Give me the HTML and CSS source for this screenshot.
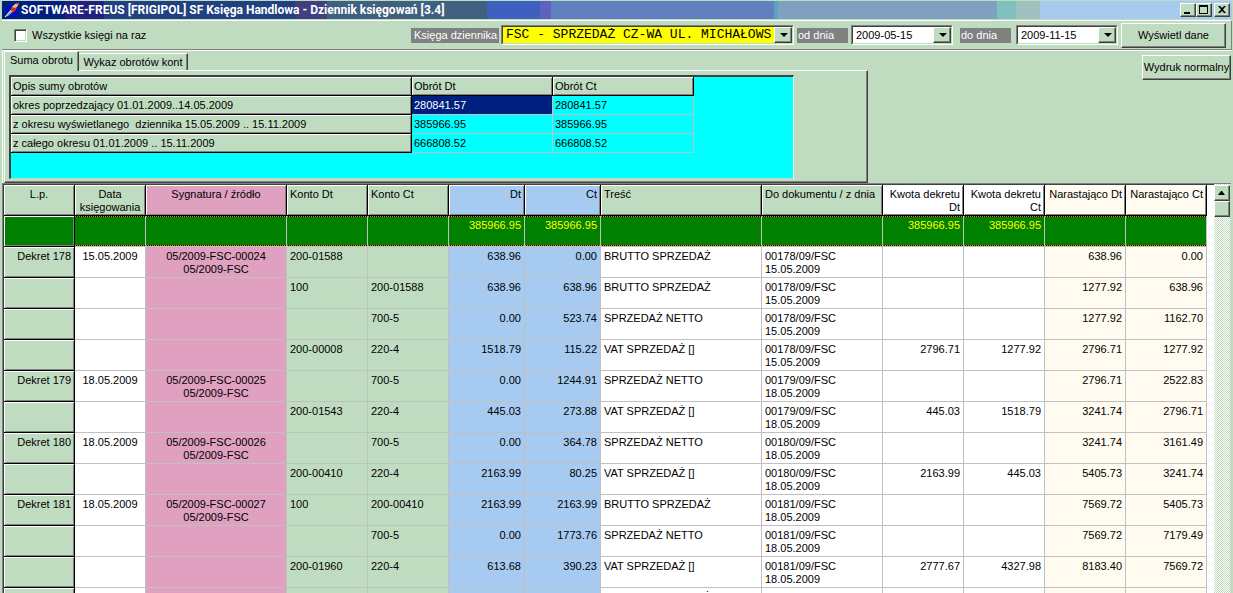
FILE: index.html
```html
<!DOCTYPE html>
<html lang="pl">
<head>
<meta charset="utf-8">
<title>SF Księga Handlowa - Dziennik księgowań</title>
<link rel="stylesheet" href="styles.css">
</head>
<body>
<header class="titlebar">
  <svg class="app-icon" width="16" height="16" viewBox="0 0 16 16" aria-hidden="true">
    <circle cx="8" cy="9" r="6.500" fill="#0010c0"/>
    <path d="M1 15L8 7L10 9L4 14Z" fill="#a0a0a4"/>
    <path d="M1 15L8 7" stroke="#fff" stroke-width="1"/>
    <path d="M7 6L10 3L13 5L12 8L9 10L7 8Z" fill="#e03010"/>
    <path d="M8 5L11 2L14 1L14 4L11 6Z" fill="#f0b890"/>
    <path d="M12 2L15 0L15 3Z" fill="#c04020"/>
  </svg>
  <h1 class="title">SOFTWARE-FREUS [FRIGIPOL] SF Księga Handlowa - Dziennik księgowań [3.4]</h1>
  <div class="window-buttons">
    <button class="win" aria-label="Minimalizuj"><svg width="12" height="10" viewBox="0 0 12 10"><path d="M2 7h6v2H2z"/></svg></button>
    <button class="win" aria-label="Maksymalizuj"><svg width="12" height="10" viewBox="0 0 12 10"><path fill-rule="evenodd" d="M1 0h9v9H1zM2 2v6h7V2z"/></svg></button>
    <button class="win win-close" aria-label="Zamknij"><svg width="12" height="10" viewBox="0 0 12 10"><path d="M2 1h2l2 2l2-2h2L7 4.500L10 8H8L6 6L4 8H2L5 4.500z"/></svg></button>
  </div>
</header>

<form class="toolbar">
  <label class="all-books"><input type="checkbox" class="check">Wszystkie księgi na raz</label>
  <label class="caption caption-book" for="book">Księga dziennika</label>
  <div class="combo combo-book">
    <select id="book"><option>FSC - SPRZEDAŻ CZ-WA UL. MICHAŁOWS</option></select>
  </div>
  <label class="caption caption-date" for="from">od dnia</label>
  <div class="combo combo-date"><select id="from"><option>2009-05-15</option></select></div>
  <label class="caption caption-date caption-to" for="to">do dnia</label>
  <div class="combo combo-date"><select id="to"><option>2009-11-15</option></select></div>
  <button type="button" class="btn btn-show">Wyświetl dane</button>
</form>

<section class="summary">
  <div class="tabs">
    <div class="tablist" role="tablist">
      <button class="tab tab-active" role="tab" aria-selected="true">Suma obrotu</button>
      <button class="tab" role="tab" aria-selected="false">Wykaz obrotów kont</button>
    </div>
    <div class="page" role="tabpanel">
      <div class="totals-box">
        <table class="totals">
          <colgroup><col class="c-desc"><col class="c-sum"><col class="c-sum"></colgroup>
          <tr><th>Opis sumy obrotów</th><th>Obrót Dt</th><th>Obrót Ct</th></tr>
          <tr><th>okres poprzedzający 01.01.2009..14.05.2009</th><td class="selected">280841.57</td><td>280841.57</td></tr>
          <tr><th>z okresu wyświetlanego&nbsp; dziennika 15.05.2009 .. 15.11.2009</th><td>385966.95</td><td>385966.95</td></tr>
          <tr><th>z całego okresu 01.01.2009 .. 15.11.2009</th><td>666808.52</td><td>666808.52</td></tr>
        </table>
      </div>
    </div>
  </div>
  <button class="btn btn-print">Wydruk normalny</button>
</section>

<main class="journal-pane">
  <div class="journal-scroll">
    <table class="journal">
      <colgroup>
        <col class="w71"><col class="w71"><col class="w141"><col class="w81"><col class="w81"><col class="w76"><col class="w76"><col><col class="w121"><col class="w81"><col class="w81"><col class="w81"><col class="w81">
      </colgroup>
      <thead>
        <tr><th>L.p.</th><th>Data<br>księgowania</th><th class="pink">Sygnatura / źródło</th><th class="left">Konto Dt</th><th class="left">Konto Ct</th><th class="blue num">Dt</th><th class="blue num">Ct</th><th class="left">Treść</th><th class="left">Do dokumentu / z dnia</th><th class="white num">Kwota dekretu<br>Dt</th><th class="white num">Kwota dekretu<br>Ct</th><th class="cream num">Narastająco Dt</th><th class="cream num">Narastająco Ct</th></tr>
      </thead>
      <tbody>
        <tr class="sum"><th></th><td></td><td></td><td></td><td></td><td>385966.95</td><td>385966.95</td><td></td><td></td><td>385966.95</td><td>385966.95</td><td></td><td></td></tr>
        <tr><th>Dekret 178</th><td>15.05.2009</td><td>05/2009-FSC-00024<br>05/2009-FSC</td><td>200-01588</td><td></td><td>638.96</td><td>0.00</td><td>BRUTTO SPRZEDAŻ</td><td>00178/09/FSC<br>15.05.2009</td><td></td><td></td><td>638.96</td><td>0.00</td></tr>
        <tr><th></th><td></td><td></td><td>100</td><td>200-01588</td><td>638.96</td><td>638.96</td><td>BRUTTO SPRZEDAŻ</td><td>00178/09/FSC<br>15.05.2009</td><td></td><td></td><td>1277.92</td><td>638.96</td></tr>
        <tr><th></th><td></td><td></td><td></td><td>700-5</td><td>0.00</td><td>523.74</td><td>SPRZEDAŻ NETTO</td><td>00178/09/FSC<br>15.05.2009</td><td></td><td></td><td>1277.92</td><td>1162.70</td></tr>
        <tr><th></th><td></td><td></td><td>200-00008</td><td>220-4</td><td>1518.79</td><td>115.22</td><td>VAT SPRZEDAŻ []</td><td>00178/09/FSC<br>15.05.2009</td><td>2796.71</td><td>1277.92</td><td>2796.71</td><td>1277.92</td></tr>
        <tr><th>Dekret 179</th><td>18.05.2009</td><td>05/2009-FSC-00025<br>05/2009-FSC</td><td></td><td>700-5</td><td>0.00</td><td>1244.91</td><td>SPRZEDAŻ NETTO</td><td>00179/09/FSC<br>18.05.2009</td><td></td><td></td><td>2796.71</td><td>2522.83</td></tr>
        <tr><th></th><td></td><td></td><td>200-01543</td><td>220-4</td><td>445.03</td><td>273.88</td><td>VAT SPRZEDAŻ []</td><td>00179/09/FSC<br>18.05.2009</td><td>445.03</td><td>1518.79</td><td>3241.74</td><td>2796.71</td></tr>
        <tr><th>Dekret 180</th><td>18.05.2009</td><td>05/2009-FSC-00026<br>05/2009-FSC</td><td></td><td>700-5</td><td>0.00</td><td>364.78</td><td>SPRZEDAŻ NETTO</td><td>00180/09/FSC<br>18.05.2009</td><td></td><td></td><td>3241.74</td><td>3161.49</td></tr>
        <tr><th></th><td></td><td></td><td>200-00410</td><td>220-4</td><td>2163.99</td><td>80.25</td><td>VAT SPRZEDAŻ []</td><td>00180/09/FSC<br>18.05.2009</td><td>2163.99</td><td>445.03</td><td>5405.73</td><td>3241.74</td></tr>
        <tr><th>Dekret 181</th><td>18.05.2009</td><td>05/2009-FSC-00027<br>05/2009-FSC</td><td>100</td><td>200-00410</td><td>2163.99</td><td>2163.99</td><td>BRUTTO SPRZEDAŻ</td><td>00181/09/FSC<br>18.05.2009</td><td></td><td></td><td>7569.72</td><td>5405.73</td></tr>
        <tr><th></th><td></td><td></td><td></td><td>700-5</td><td>0.00</td><td>1773.76</td><td>SPRZEDAŻ NETTO</td><td>00181/09/FSC<br>18.05.2009</td><td></td><td></td><td>7569.72</td><td>7179.49</td></tr>
        <tr><th></th><td></td><td></td><td>200-01960</td><td>220-4</td><td>613.68</td><td>390.23</td><td>VAT SPRZEDAŻ []</td><td>00181/09/FSC<br>18.05.2009</td><td>2777.67</td><td>4327.98</td><td>8183.40</td><td>7569.72</td></tr>
        <tr><th>Dekret 182</th><td>18.05.2009</td><td>05/2009-FSC-00028<br>05/2009-FSC</td><td>100</td><td>200-01960</td><td>613.68</td><td>613.68</td><td>BRUTTO SPRZEDAŻ</td><td>00182/09/FSC<br>18.05.2009</td><td></td><td></td><td>8797.08</td><td>8183.40</td></tr>
      </tbody>
    </table>
  </div>
  <div class="scrollbar">
    <button class="scroll-up" aria-label="W górę"><svg width="8" height="4" viewBox="0 0 8 4"><path d="M0 4h7L4 0H3z"/></svg></button>
    <div class="thumb"></div>
  </div>
</main>
</body>
</html>
```

FILE: styles.css
```css
:root {
  --face: #c0dcc0;
  --shadow: #808080;
  --dark: #404040;
  --line: #c0c0c0;
  --navy: #002080;
}

* { box-sizing: border-box; }

body {
  margin: 0;
  padding: 1px 1px 0 2px;
  height: 100vh;
  overflow: hidden;
  display: flex;
  flex-direction: column;
  background: var(--face);
  color: #000;
  font: 11px/13px "Liberation Sans", Arial, sans-serif;
}

button, select, input { font: inherit; color: inherit; margin: 0; border-radius: 0; }

/* title bar */
.titlebar {
  flex: none;
  height: 18px;
  display: flex;
  align-items: center;
  gap: 1px;
  padding: 0 2px;
  background: linear-gradient(90deg,
    #002080 0 5.1%, #202080 5.1% 8.3%, #204080 8.3% 23.8%, #404080 23.8% 26.4%,
    #406080 26.4% 39.4%, #4060c0 39.4% 43.7%, #6060c0 43.7% 44.6%, #6080c0 44.6% 62.8%,
    #60a0c0 62.8% 63.1%, #80a0c0 63.1% 80.9%, #80c0c0 80.9% 82.4%, #a0c0c0 82.4% 84.4%,
    #a6caf0 84.4%);
}
.app-icon { flex: none; }
.title {
  flex: 1;
  margin: 0;
  color: #fff;
  font: bold 12px/18px Roboto, sans-serif;
  white-space: nowrap;
}
.window-buttons { display: flex; }
.win {
  width: 16px;
  height: 14px;
  padding: 0;
  display: flex;
  align-items: center;
  justify-content: center;
  background: var(--face);
  border: 1px solid;
  border-color: #fff var(--dark) var(--dark) #fff;
  box-shadow: inset -1px -1px var(--shadow);
}
.win-close { margin-left: 2px; }

/* toolbar */
.toolbar {
  flex: none;
  height: 30px;
  margin-top: 1px;
  padding: 0 5px 0 12px;
  display: flex;
  align-items: center;
  border: solid;
  border-width: 1px 1px 1px 0;
  border-color: #fff var(--shadow) var(--shadow);
  white-space: nowrap;
}
.all-books { display: flex; align-items: center; gap: 5px; margin-right: auto; }
.check {
  appearance: none;
  width: 13px;
  height: 13px;
  background: #fff;
  border: 1px solid;
  border-color: var(--shadow) #fff #fff var(--shadow);
  box-shadow: inset 1px 1px var(--dark), inset -1px -1px var(--face);
}
.caption { background: var(--shadow); color: #fff; height: 15px; padding: 1px; }
.caption-book { width: 88px; padding-left: 3px; margin-right: 2px; }
.caption-date { width: 51px; margin: 0 3px; }
.caption-to { margin: 0 5px 0 7px; }
.combo {
  position: relative;
  height: 20px;
  border: 1px solid;
  border-color: var(--shadow) #fff #fff var(--shadow);
}
.combo select {
  appearance: none;
  display: block;
  width: 100%;
  height: 18px;
  padding: 0 17px 0 3px;
  border: 1px solid;
  border-color: var(--dark) var(--face) var(--face) var(--dark);
  background: #fff;
  outline: 0;
}
.combo::before {
  content: "";
  position: absolute;
  top: 1px;
  right: 1px;
  bottom: 1px;
  width: 16px;
  background: var(--face);
  border: 1px solid;
  border-color: #fff var(--dark) var(--dark) #fff;
  box-shadow: inset -1px -1px var(--shadow);
  pointer-events: none;
}
.combo::after {
  content: "";
  position: absolute;
  top: 7px;
  right: 5px;
  border: solid transparent;
  border-width: 4px 4px 0;
  border-top-color: #000;
  pointer-events: none;
}
.combo-book { width: 293px; }
.combo-book select { background: #ff0; font: 13px/16px "Liberation Mono", "Courier New", monospace; }
.combo-date { width: 102px; }

.btn {
  padding: 0;
  background: var(--face);
  border: 1px solid;
  border-color: #fff var(--dark) var(--dark) #fff;
  box-shadow: inset -1px -1px var(--shadow);
  white-space: nowrap;
}
.btn-show { width: 105px; height: 25px; margin-left: 3px; }
.btn-print { width: 89px; height: 25px; margin: 4px 1px 0 auto; }

/* tabbed summary */
.summary {
  flex: none;
  display: flex;
  align-items: flex-start;
  border-top: 1px solid #fff;
  border-left: 1px solid #fff;
  padding-left: 1px;
}
.tabs { flex: 0 1 864px; display: flex; flex-direction: column; }
.tablist { display: flex; align-items: flex-end; height: 20px; z-index: 1; margin-bottom: -1px; }
.tab {
  width: 109px;
  height: 17px;
  margin-bottom: 1px;
  padding: 0 2px;
  background: var(--face);
  border: solid;
  border-width: 1px 1px 0 0;
  border-color: #fff var(--dark);
  box-shadow: inset -1px 0 var(--shadow);
  white-space: nowrap;
}
.tab-active { width: 75px; height: 20px; margin: 0; padding-bottom: 2px; border-left: 1px solid #fff; }
.page {
  border: 1px solid;
  border-color: #fff var(--dark) var(--dark) #fff;
  box-shadow: inset -1px -1px var(--shadow);
  padding: 4px 73px 3px 4px;
}
.totals-box {
  height: 104px;
  background: #0ff;
  border: solid;
  border-width: 2px 1px 1px 2px;
  border-color: var(--dark) #fff var(--face) var(--dark);
  overflow: hidden;
}
.totals { table-layout: fixed; width: 683px; border-spacing: 0; }
.c-desc { width: 401px; }
.c-sum { width: 141px; }
.totals th, .totals td {
  height: 19px;
  padding: 0 2px;
  text-align: left;
  font-weight: normal;
  white-space: nowrap;
  border: solid var(--line);
  border-width: 0 1px 1px 0;
}
.totals th {
  background: var(--face);
  border-color: #000;
  box-shadow: inset 1px 1px #fff, inset -1px -1px var(--shadow);
}
.totals .selected { background: var(--navy); color: #fff; }

/* journal */
.journal-pane {
  flex: 1;
  min-height: 0;
  display: flex;
  margin-right: 1px;
  border: solid var(--shadow);
  border-width: 1px 0 0 1px;
  background: #fff;
  overflow: hidden;
}
.journal-scroll {
  flex: 1;
  min-width: 0;
  padding-right: 7px;
  border: solid var(--dark);
  border-width: 1px 0 0 1px;
}
.journal { table-layout: fixed; width: 100%; border-spacing: 0; }
.w71 { width: 71px; }
.w76 { width: 76px; }
.w81 { width: 81px; }
.w121 { width: 121px; }
.w141 { width: 141px; }
.journal th, .journal td {
  height: 31px;
  padding: 3px 3px 1px;
  vertical-align: top;
  font-weight: normal;
  white-space: nowrap;
  border: solid var(--line);
  border-width: 0 1px 1px 0;
}
.journal th {
  background: var(--face);
  border-color: #000;
  box-shadow: inset 1px 1px #fff, inset -1px -1px var(--shadow);
}
.journal tbody th { text-align: right; }
.journal th.pink, .journal td:nth-child(3) { background: #e0a0c0; text-align: center; }
.journal td:nth-child(2) { text-align: center; }
.journal td:nth-child(4), .journal td:nth-child(5) { background: var(--face); }
.journal th.blue, .journal td:nth-child(6), .journal td:nth-child(7) { background: #a6caf0; }
.journal th.white { background: #fff; }
.journal th.cream, .journal td:nth-child(n+12) { background: #fffbf0; }
.journal th.num, .journal td:nth-child(6), .journal td:nth-child(7), .journal td:nth-child(n+10) { text-align: right; }
.journal th.left { text-align: left; }
.journal .sum th, .journal .sum td:nth-child(n) { background: #008000; color: #ff0; }
.journal .sum td:nth-child(n) {
  background:
    repeating-linear-gradient(90deg, #ff8000 0 1px, #000 1px 2px) top / 100% 1px no-repeat,
    repeating-linear-gradient(90deg, #ff8000 0 1px, #000 1px 2px) bottom / 100% 1px no-repeat,
    #008000;
}

.scrollbar {
  flex: none;
  width: 17px;
  padding-top: 1px;
  background: repeating-conic-gradient(#fff 0 25%, var(--face) 0 50%) 0 0 / 2px 2px;
  border-right: 1px solid var(--face);
}
.scroll-up, .thumb {
  display: flex;
  width: 16px;
  height: 16px;
  padding: 0;
  align-items: center;
  justify-content: center;
  background: var(--face);
  border: 1px solid;
  border-color: #fff var(--dark) var(--dark) #fff;
  box-shadow: inset -1px -1px var(--shadow);
}
```
